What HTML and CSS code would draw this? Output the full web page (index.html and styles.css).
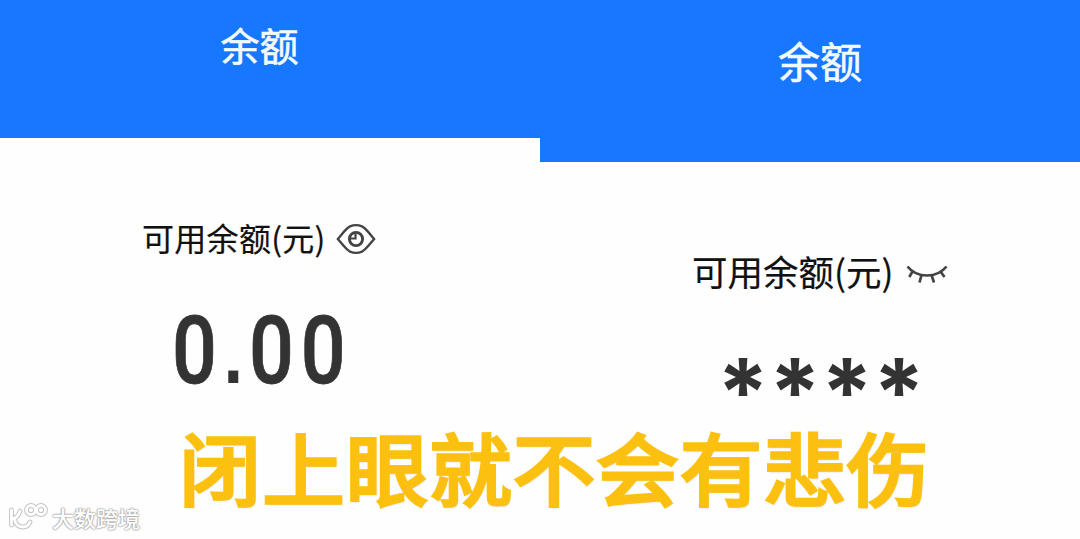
FILE: index.html
```html
<!DOCTYPE html>
<html lang="zh-CN">
<head>
<meta charset="utf-8">
<title>余额</title>
<link rel="stylesheet" href="styles.css">
</head>
<body>
<main class="stage">
  <section class="panel panel-open">
    <header class="bar"><h1 class="title">余额</h1></header>
    <div class="label-row">
      <span class="label">可用余额(元)</span>
      <svg class="eye" viewBox="0 0 40 32" fill="none" stroke="#444" stroke-width="2.4">
        <path d="M1.800 16C7 10 10 5.500 14 3.400Q20 .8 26 3.400C30 5.500 33 10 38.200 16C33 22 30 26.500 26 28.600Q20 31.200 14 28.600C10 26.500 7 22 1.800 16Z" stroke-linejoin="round"/>
        <circle cx="20" cy="16" r="6.600" stroke-width="2.900"/>
        <path d="M19.500 10V15.500H14" stroke-width="2.200"/>
      </svg>
    </div>
    <div class="amount">0<span class="point">.</span>00</div>
  </section>
  <section class="panel panel-closed">
    <header class="bar"><h1 class="title">余额</h1></header>
    <div class="label-row">
      <span class="label">可用余额(元)</span>
      <svg class="lashes" viewBox="0 0 42 22" fill="none" stroke="#444" stroke-width="2.700">
        <path d="M1.500 2.500C11 14.500 31 14.500 40.500 2.500M6.500 7.500L3.300 13M15.500 11L13.500 18.500M25.500 11L28 18.500M34.500 7.500L38.500 13"/>
      </svg>
    </div>
    <div class="mask">****</div>
  </section>
  <p class="caption">闭上眼就不会有悲伤</p>
  <div class="watermark">
    <svg class="mark" viewBox="0 0 40 32" fill="none" stroke-linecap="round" stroke-linejoin="round">
      <g stroke="#c4c4c4" stroke-width="4.800"><path d="M3.500 9V24M4 18Q10 17 12 10M6.500 18Q8 26 15 26Q20 26 22 21"/><circle cx="23" cy="9" r="4.500"/><circle cx="33" cy="9" r="4.500"/></g>
      <g stroke="#fff" stroke-width="2.800"><path d="M3.500 9V24M4 18Q10 17 12 10M6.500 18Q8 26 15 26Q20 26 22 21"/><circle cx="23" cy="9" r="4.500"/><circle cx="33" cy="9" r="4.500"/></g>
    </svg>
    <span class="brand">大数跨境</span>
  </div>
</main>
</body>
</html>
```
FILE: styles.css
```css
* { box-sizing: border-box; }
body { margin: 0; background: #fff; font-family: "Noto Sans CJK SC", sans-serif; }
.stage { position: relative; display: grid; grid-template-columns: 1fr 1fr; width: 1080px; height: 539px; overflow: hidden; background: #fefefe; }
.bar { display: flex; justify-content: center; background: #1777ff; color: #f4fbff; }
.title { margin: 0; font-weight: 400; line-height: 1; -webkit-text-stroke: .6px #f4fbff; }
.label-row { display: flex; align-items: center; color: #111; -webkit-text-stroke: .2px #111; }
.label { line-height: 1; white-space: nowrap; }
.panel-open .bar { height: 138px; padding: 25px 21px 0 0; }
.panel-open .title { font-size: 39px; }
.panel-open .label-row { height: 40px; margin-top: 81px; padding-left: 142px; gap: 10px; font-size: 32px; letter-spacing: .3px; }
.panel-open .label { padding-bottom: 5px; }
.panel-closed .bar { height: 162px; padding: 39px 0 0 20px; }
.panel-closed .title { font-size: 42px; }
.panel-closed .label-row { height: 40px; margin-top: 91px; padding-left: 152px; gap: 12px; font-size: 35.500px; }
.panel-closed .label { padding-bottom: 4px; }
.eye { width: 40px; height: 32px; }
.lashes { width: 42px; height: 22px; margin-top: 4px; }
.amount { width: max-content; margin: 45px 0 0 172px; font: 500 94px/95px Roboto, sans-serif; letter-spacing: 8px; color: #333; -webkit-text-stroke: .8px #333; transform: scaleX(.84); transform-origin: left; }
.point { font-family: "Liberation Sans", sans-serif; font-weight: 700; font-size: 84px; letter-spacing: 7px; -webkit-text-stroke: 0; }
.mask { width: max-content; margin: 69px 0 0 177px; font: 700 93px/60px Inter, sans-serif; color: #333; }
.caption { position: absolute; left: 179px; top: 428px; margin: 0; font-size: 82px; line-height: 82px; font-weight: 400; letter-spacing: 1.500px; white-space: nowrap; color: #fbc010; -webkit-text-stroke: 3.800px #fbc010; text-shadow: 1px 2px 2px rgba(120, 100, 50, .28); transform: scaleY(.95); transform-origin: top; }
.watermark { position: absolute; left: 8px; top: 501px; display: flex; align-items: center; gap: 4px; }
.mark { width: 40px; height: 32px; }
.brand { font-size: 22px; line-height: 32px; font-weight: 500; color: #fff; text-shadow: 0 0 1px #999, 0 0 2px #999, 0 0 2px #aaa; }
```
